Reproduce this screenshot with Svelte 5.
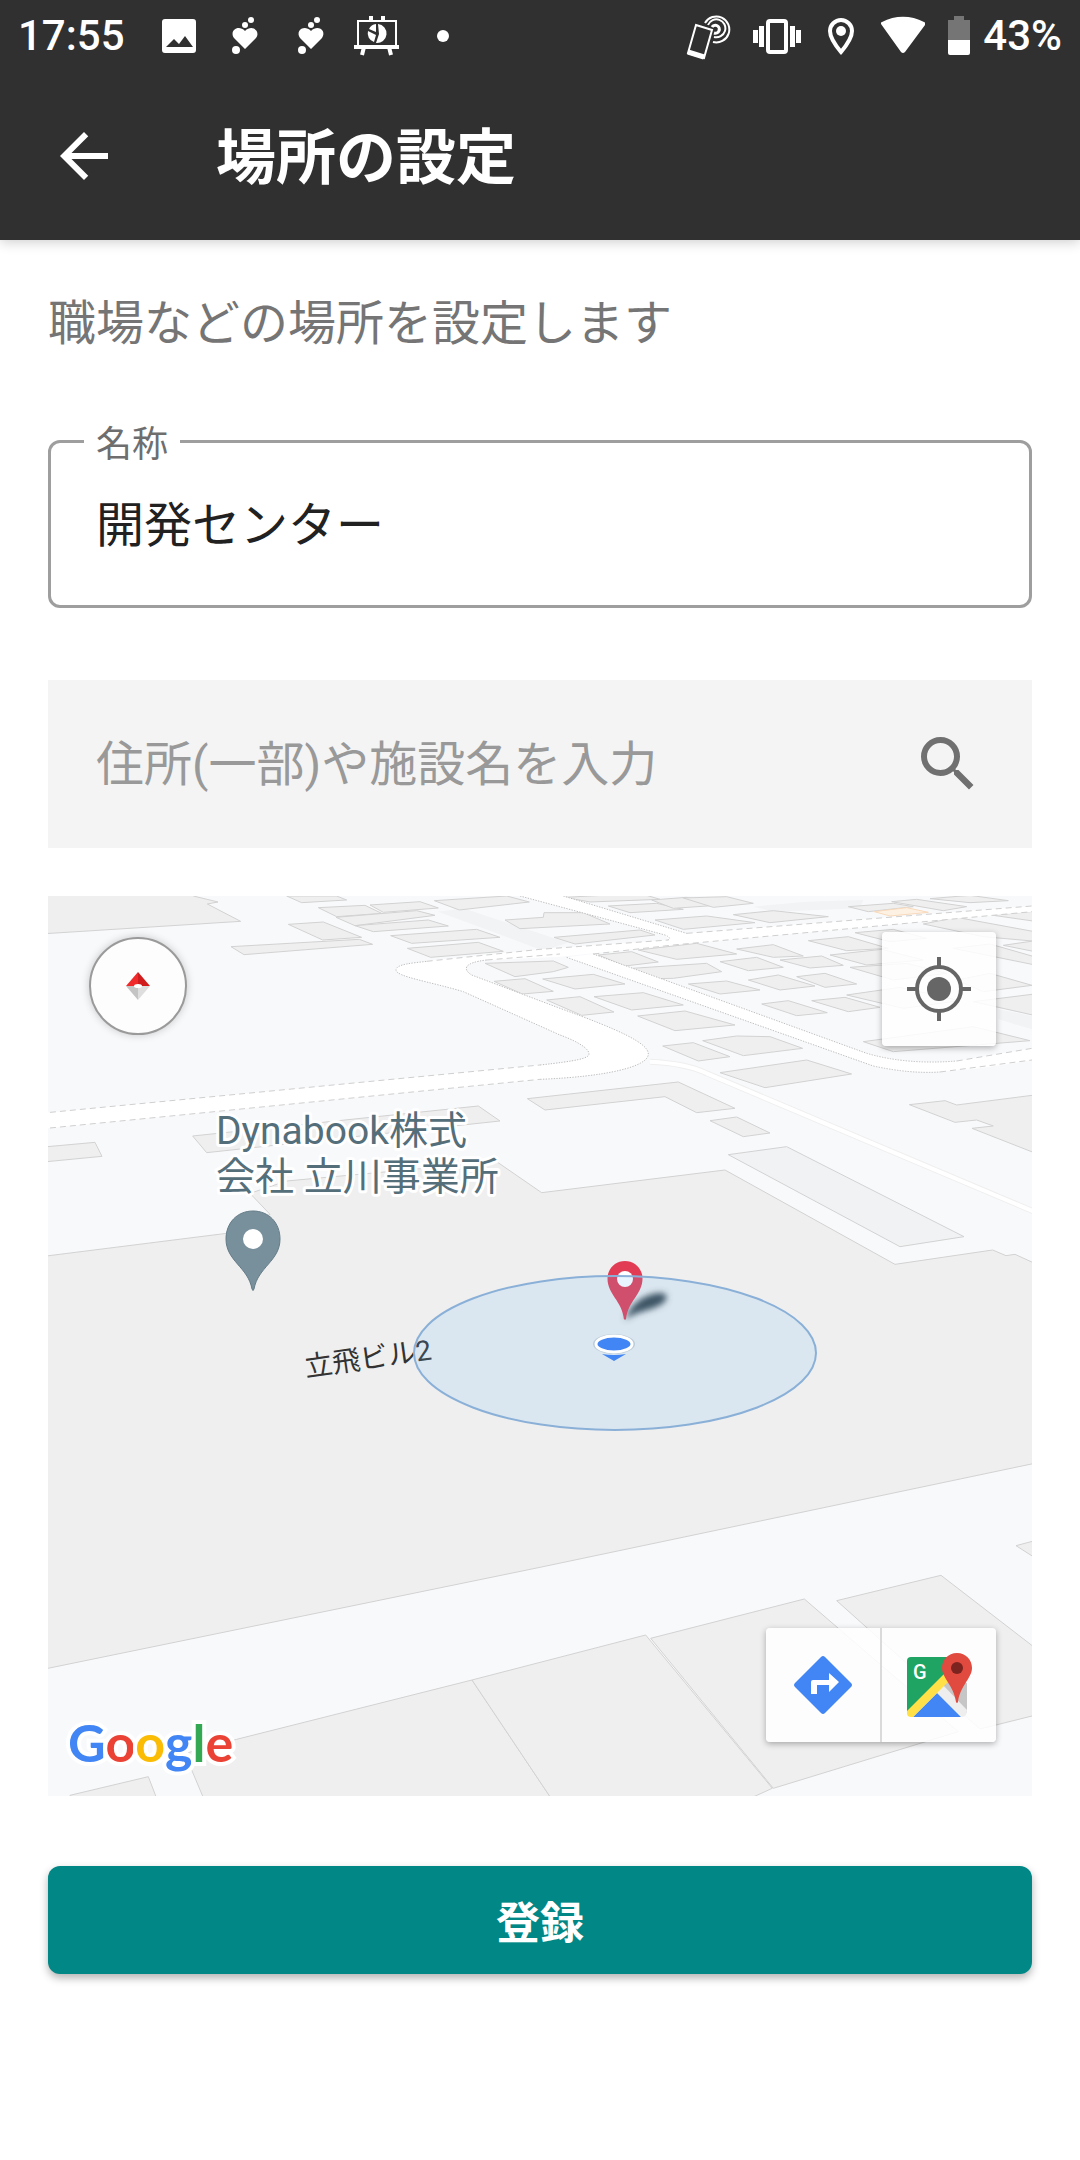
<script>
    let nombre = "開発センター";
    let busqueda = "";

    // Edificios del mapa, agrupados por cuadrante (3 unidades = 1px)
    const cuadrantes = [
        {
            x: -24,
            y: -48,
            edificios: [
                "0,0 440,0 460,48 534,66 502,72 602,124 0,162",
                "745,133 850,126 965,172 848,180",
                "573,200 958,178 998,193 612,224",
                "740,48 785,68 920,60 890,48",
                "835,83 975,76 1025,100 890,110",
                "990,75 1140,65 1195,84 1030,97",
                "888,112 1130,92 1185,106 945,137",
                "945,137 1165,120 1225,138 1000,155",
                "1052,167 1310,148 1380,172 1115,190",
                "1102,205 1315,187 1390,214 1172,232",
                "1183,62 1400,48 1468,66 1258,90",
                "1362,304 1455,296 1540,334 1447,342",
                "0,802 165,787 186,829 0,847",
                "458,768 1315,678 1380,723 500,818",
            ],
        },
        {
            x: 1476,
            y: -48,
            edificios: [
                "75,52 300,40 360,58 150,66",
                "205,78 350,70 430,88 270,98",
                "335,60 440,52 545,75 400,85",
                "430,54 560,50 640,70 520,82",
                "-105,120 10,112 12,98 130,98 210,132 -60,146",
                "345,120 500,108 645,128 430,148",
                "580,104 700,92 865,110 690,128",
                "42,172 300,150 345,165 105,192",
                "295,210 470,190 590,222 410,238",
                "175,225 275,215 355,246 255,258",
                "590,207 700,194 790,228 700,232",
                "720,240 845,228 910,256 810,264",
                "262,266 500,250 545,275 400,295 330,296",
                "540,245 650,232 730,262 625,272",
                "445,312 560,303 660,330 540,342",
                "625,300 715,285 825,318 720,330",
                "770,290 855,280 950,312 855,322",
                "-165,250 40,243 85,262 40,275 -75,290",
                "8,297 160,283 255,312 105,327",
                "20,360 120,350 222,396 125,406",
                "162,350 310,338 430,375 275,390",
                "293,408 435,393 585,435 405,452",
                "665,372 745,362 862,398 770,407",
                "815,362 915,352 1020,382 925,395",
                "368,498 460,488 570,530 475,543",
                "488,482 590,468 690,470 788,505 610,527",
                "540,578 800,540 935,582 675,623",
                "-38,656 415,606 585,685 470,698 375,650 15,690",
                "510,722 590,711 690,759 610,770",
                "1108,674 1215,662 1250,675 1500,643 1500,825 1296,745 1360,738 1310,720 1245,727",
                "945,158 1060,148 1160,175 1050,185",
                "805,182 925,170 1045,205 920,212",
                "870,225 1026,208 1150,240 980,255",
                "930,262 1100,250 1220,280 1060,300",
                "920,345 1080,322 1260,362 1090,385",
                "970,485 1300,440 1470,482 1060,515",
                "925,80 1060,70 1120,80 985,95",
                "1055,65 1130,58 1280,80 1210,92",
                "1170,56 1290,46 1405,62 1290,68",
                "1150,132 1250,112 1500,158 1500,185 1330,170",
                "1360,106 1500,92 1500,126",
                "1240,205 1350,192 1500,235 1500,258",
                "1390,196 1500,180 1500,218",
                "1250,300 1350,280 1476,316 1330,335",
                "1300,365 1500,340 1500,410",
            ],
        },
        {
            x: -24,
            y: 1332,
            edificios: ["90,1366 325,1310 350,1375 90,1375"],
        },
        {
            x: 1476,
            y: 1332,
            edificios: [
                "332,895 793,777 1255,1175 700,1345",
                "890,782 1203,706 1500,935 1500,1122 1320,1167",
                "1428,617 1500,598 1500,663",
            ],
        },
    ];

    // Bordes discontinuos de las calles
    const bordes = [
        "M-1500,700 L0,555",
        "M-1500,747 L0,598",
        "M-340,244 L0,208 L385,180",
        "M-160,240 L60,222",
        "M160,222 L400,195 L1476,95",
        "M440,160 L1476,78",
        "M1250,543 L1476,505",
        "M1200,576 L1476,540",
    ];
    const bordesFinos = [
        "M0,555 C110,543 147,535 147,522 C147,495 60,465 60,465 L-230,335 C-330,305 -432,290 -432,270 C-432,252 -380,249 -340,244",
        "M-160,240 C-230,248 -232,268 -205,285 L60,385 C240,450 325,490 325,522 C325,560 200,590 0,598",
        "M70,48 L440,160",
        "M-60,48 L375,165 Q400,176 380,181",
        "M160,222 L980,520 Q1100,555 1250,543",
        "M80,232 L1000,558 Q1110,582 1200,576",
    ];
</script>

<header>
    <div class="barraEstado">
        <span class="hora">17:55</span>
        <div class="avisos">
            <svg viewBox="0 0 48 48">
                <path
                    fill-rule="evenodd"
                    d="M10 7h28a3 3 0 0 1 3 3v28a3 3 0 0 1-3 3H10a3 3 0 0 1-3-3V10a3 3 0 0 1 3-3zM11 35h27l-8-11-6 8-5-5z"
                />
            </svg>
            {#each [1, 2] as n (n)}
                <svg viewBox="0 0 48 48">
                    <path d="M24 37 13 26c-5-7 4-14 11-7 7-7 16 0 11 7z" />
                    <circle cx="15" cy="38" r="4" />
                    <circle cx="24" cy="13" r="3" />
                    <circle cx="30" cy="8" r="3" />
                </svg>
            {/each}
            <svg viewBox="0 0 48 48">
                <path
                    d="M5 9h38v25H5z"
                    fill="none"
                    stroke="#fff"
                    stroke-width="2"
                />
                <path
                    d="M1 35h45M18 4v5M30 4v5M11 35l-2 8M36 35l2 8"
                    fill="none"
                    stroke="#fff"
                    stroke-width="4"
                />
                <path
                    d="M25 12a9 9 0 0 1-2 19l3-9zM23 12v8l-7-3a9 9 0 0 1 7-5zM15 19l8 4-2 7a9 9 0 0 1-6-11z"
                />
            </svg>
            <svg viewBox="0 0 48 48"><circle cx="24" cy="24" r="6" /></svg>
        </div>

        <div class="sistema">
            <svg width="46" viewBox="0 0 46 48">
                <g fill="none" stroke="#fff">
                    <path
                        d="M20 11a13 13 0 1 1 8 19M23 13a9 9 0 1 1 6 12"
                        stroke-width="2"
                    />
                    <path d="M27 15a4 4 0 1 1 2 6" stroke-width="3" />
                    <path d="m11 13 16 5-8 28-16-5z" stroke-width="2" />
                    <path d="m3 40 16 5" stroke-width="5" />
                </g>
            </svg>
            <svg width="48" viewBox="0 0 48 48">
                <rect
                    x="15"
                    y="9"
                    width="18"
                    height="31"
                    rx="2"
                    fill="none"
                    stroke="#fff"
                    stroke-width="4"
                />
                <path
                    d="M0 18h5v13H0zM6 14h5v21H6zM37 14h5v21h-5zM43 18h5v13h-5z"
                />
            </svg>
            <svg width="36" viewBox="0 0 36 48">
                <path
                    d="M18 8c-6 0-11 5-11 11 0 7 6 15 11 21 5-6 11-14 11-21 0-6-5-11-11-11z"
                    fill="none"
                    stroke="#fff"
                    stroke-width="4"
                />
                <circle cx="18" cy="19" r="5" />
            </svg>
            <svg width="44" viewBox="0 0 44 48">
                <path d="M0 12Q-1 11 1 10C14 3 30 3 43 10q2 1 1 3L24 40q-2 2-4 0z" />
            </svg>
            <svg width="24" viewBox="0 0 24 48">
                <path d="M7 4h10v4h6v20H1V8h6z" fill="#757575" />
                <path d="M1 28h22v13q0 2-2 2H3q-2 0-2-2z" />
            </svg>
            <span class="bateria">43%</span>
        </div>
    </div>

    <div class="barraTitulo">
        <button class="volver" aria-label="戻る">
            <svg viewBox="0 0 24 24">
                <path d="M20 11H7.830l5.590-5.590L12 4l-8 8 8 8 1.410-1.410L7.830 13H20v-2z" />
            </svg>
        </button>
        <h1>場所の設定</h1>
    </div>
</header>

<main>
    <p class="descripcion">職場などの場所を設定します</p>

    <div class="campo">
        <label for="nombre">名称</label>
        <input id="nombre" type="text" bind:value={nombre} />
    </div>

    <div class="buscador">
        <input
            type="text"
            aria-label="住所(一部)や施設名を入力"
            placeholder="住所(一部)や施設名を入力"
            bind:value={busqueda}
        />
        <button aria-label="検索">
            <svg viewBox="0 0 24 24">
                <path
                    d="M15.500 14h-.79l-.28-.27A6.471 6.471 0 0 0 16 9.500 6.500 6.500 0 1 0 9.500 16c1.610 0 3.090-.59 4.230-1.570l.27.28v.79l5 4.990L20.490 19l-4.990-5zm-6 0C7.010 14 5 11.990 5 9.500S7.010 5 9.500 5 14 7.010 14 9.500 11.990 14 9.500 14z"
                />
            </svg>
        </button>
    </div>

    <div class="mapa">
        <svg
            class="plano"
            viewBox="0 0 984 900"
            preserveAspectRatio="xMidYMid slice"
        >
            <defs>
                <filter id="sombra" x="-50%" y="-80%" width="200%" height="260%">
                    <feGaussianBlur stdDeviation="3" />
                </filter>
            </defs>

            <g transform="scale(0.33333)">
                <!-- zonas claras -->
                <g class="zona">
                    <path d="M1171 47 1246 37 1560 140 1486 164z" />
                    <path d="M2116 32 2276 17 2446 12 2436 37 2176 47z" />
                    <path d="M2852 340 2952 360V400L2852 370z" />
                </g>

                {#each cuadrantes as c}
                    <g class="edificio" transform="translate({c.x} {c.y})">
                        {#each c.edificios as puntos}
                            <polygon points={puntos} />
                        {/each}
                    </g>
                {/each}

                <g class="edificio">
                    <polygon
                        points="-5,1080 536,1012 666,955 606,892 716,855 1346,797 1481,890 2031,822 2541,1105 2834,1062 2874,1079 2901,1075 2960,1102 2960,1702 1476,2014 -5,2318"
                    />
                    <polygon
                        points="466,2705 431,2622 420,2570 566,2530 1272,2352 1508,2705"
                    />
                    <polygon
                        points="1508,2705 1272,2352 1793,2217 2173,2677 2111,2705"
                    />
                    <polygon
                        class="claro"
                        points="2041,776 2216,752 2748,1022 2556,1052"
                    />
                </g>

                <!-- calles -->
                <g transform="translate(1476 -48)">
                    <polygon class="tienda" points="1003,95 1100,83 1165,97 1050,108" />
                    <g fill="#fff">
                        <path
                            d="M-1500 700 0 555C110 543 147 535 147 522 147 495 60 465 60 465L-230 335C-330 305-432 290-432 270-432 252-380 249-340 244L0 208 100 222-160 240C-230 248-232 268-205 285L60 385C240 450 325 490 325 522 325 560 200 590 0 598L-1500 747z"
                        />
                        <path d="M-340 244 0 208 385 180 440 160 1476 78V95L400 195 60 230-160 240z" />
                        <path d="M-60 48H70L440 160 400 195 375 165z" />
                        <path
                            d="M80 232 160 222 980 520Q1100 555 1250 543L1476 505V540Q1150 600 1000 558z"
                        />
                    </g>
                    <g class="borde">
                        {#each bordes as d}
                            <path {d} />
                        {/each}
                    </g>
                    <g class="borde fino">
                        {#each bordesFinos as d}
                            <path {d} />
                        {/each}
                    </g>
                    <g fill="none">
                        <path
                            d="M330 545Q440 550 500 580L1480 994"
                            stroke="#efefef"
                            stroke-width="18"
                        />
                        <path
                            d="M330 545Q440 550 500 580L1480 994"
                            stroke="#fff"
                            stroke-width="12"
                        />
                    </g>
                </g>
            </g>

            <text class="edificioNombre" transform="translate(258 481) rotate(-8)">立飛ビル2</text>

            <!-- marcador rojo con el radio encima -->
            <path
                d="M577 424C582 408 596 398 612 397 622 397 620 406 610 410 600 415 586 416 577 424z"
                fill="#34424c"
                filter="url(#sombra)"
            />
            <path
                fill="#e23c55"
                d="M577 365c-10 0-17.500 8-17.500 17.500 0 16 14.500 22 16.500 41h2c2-19 16.500-25 16.500-41C594.500 373 587 365 577 365z"
            />
            <circle cx="577" cy="383" r="8" fill="#fff" />
            <ellipse class="radio" cx="567" cy="457" rx="201" ry="77" />

            <!-- posición actual -->
            <ellipse cx="566" cy="448" rx="21" ry="10" fill="#8aa0b4" opacity="0.4" />
            <ellipse
                cx="566"
                cy="448"
                rx="18"
                ry="8"
                fill="#4285f4"
                stroke="#fff"
                stroke-width="3"
            />
            <path d="M554 458q12 2 24 0l-12 7z" fill="#4285f4" />

            <path
                d="M205 315c-16 0-27 12-27 28 0 22 22 28 26 50q1 3 2 0c4-22 26-28 26-50 0-16-11-28-27-28z"
                fill="#78909c"
                stroke="#647c88"
                stroke-width="1"
            />
            <circle cx="205" cy="343" r="10" fill="#fff" />
            <text class="lugar" x="168" y="248">Dynabook株式</text>
            <text class="lugar" x="168" y="294">会社 立川事業所</text>
        </svg>

        <button class="brujula" aria-label="コンパス">
            <svg viewBox="0 0 28 28">
                <path d="M14 0 2 14h12z" fill="#f02a2a" />
                <path d="M14 0 26 14H14z" fill="#d01c1c" />
                <path d="M2 14h12v14z" fill="#c4c4c4" />
                <path d="M26 14H14v14z" fill="#dedede" />
                <ellipse cx="14" cy="14" rx="4" ry="2" fill="#fff" />
            </svg>
        </button>

        <button class="control ubicar" aria-label="現在地">
            <svg viewBox="0 0 64 64">
                <circle cx="32" cy="32" r="12" fill="#666" />
                <circle
                    cx="32"
                    cy="32"
                    r="22"
                    fill="none"
                    stroke="#666"
                    stroke-width="4"
                />
                <path
                    d="M32 0v9M32 55v9M0 32h9M55 32h9"
                    stroke="#666"
                    stroke-width="4"
                />
            </svg>
        </button>

        <div class="control enlaces">
            <button aria-label="経路">
                <svg viewBox="0 0 64 64">
                    <path
                        d="M30 4q2-2 4 0l26 26q2 2 0 4L34 60q-2 2-4 0L4 34q-2-2 0-4z"
                        fill="#4285f4"
                    />
                    <path d="M20 41V29q0-2 2-2h16v-7l10 9-10 10v-7H26v9z" fill="#fff" />
                </svg>
            </button>
            <button aria-label="マップ">
                <svg viewBox="0 0 64 64">
                    <path d="M4 4h36v22L0 60V8q0-4 4-4z" fill="#1fa463" />
                    <path d="M38 22 60 30V60L30 37z" fill="#c6c6c6" />
                    <path d="M35 31 60 57q0 7-5 7L29 39z" fill="#eee" />
                    <path d="M30 40 54 64H6z" fill="#4285f4" />
                    <path d="M0 58 37 21l4 8L6 64H4q-4 0-4-4z" fill="#ffe047" />
                    <path
                        d="M50 0C41 0 35 7 35 15c0 10 12 18 14 34q1 2 2 0c2-16 14-24 14-34C65 7 59 0 50 0z"
                        fill="#e04a3f"
                    />
                    <circle cx="50" cy="15" r="6" fill="#7b231e" />
                    <text class="letraG" x="6" y="26">G</text>
                </svg>
            </button>
        </div>

        <div class="google">
            <span class="azul">G</span><span class="rojo">o</span><span
                class="amarillo">o</span
            ><span class="azul">g</span><span class="verde">l</span><span
                class="rojo">e</span
            >
        </div>
    </div>

    <button class="registrar">登録</button>
</main>

<style>
    :global(body) {
        background-color: #fff;
        font-family: Roboto, "Noto Sans CJK JP", sans-serif;
    }
    button,
    input {
        font-family: inherit;
        border: none;
        padding: 0;
        margin: 0;
        background: none;
        border-radius: 0;
    }
    svg {
        display: block;
    }

    header {
        background-color: #303030;
        color: #fff;
        box-shadow: 0 2px 12px rgba(0, 0, 0, 0.2);
    }
    .barraEstado {
        display: flex;
        align-items: center;
        height: 72px;
        padding: 0 18px;
        font-size: 42px;
        line-height: 48px;
        font-weight: 500;
    }
    .barraEstado svg {
        height: 48px;
        fill: #fff;
    }
    .avisos {
        display: flex;
        gap: 18px;
        margin-left: 30px;
    }
    .avisos svg {
        width: 48px;
    }
    .sistema {
        display: flex;
        align-items: center;
        gap: 22px;
        margin-left: auto;
    }
    .bateria {
        margin-left: -10px;
    }
    .barraTitulo {
        display: flex;
        align-items: center;
        gap: 96px;
        height: 168px;
        padding: 0 48px;
    }
    .volver svg {
        width: 72px;
        height: 72px;
        fill: #fff;
    }
    h1 {
        margin: 0;
        padding-top: 6px;
        font-size: 60px;
        line-height: 72px;
        font-weight: 700;
    }

    main {
        display: flex;
        flex-direction: column;
        padding: 48px;
    }
    .descripcion {
        margin: 0;
        font-size: 48px;
        line-height: 72px;
        color: #757575;
    }
    .campo {
        position: relative;
        display: flex;
        box-sizing: border-box;
        height: 168px;
        margin-top: 80px;
        border: 3px solid #9e9e9e;
        border-radius: 12px;
    }
    .campo label {
        position: absolute;
        top: -22px;
        left: 33px;
        padding: 0 12px;
        background-color: #fff;
        font-size: 36px;
        line-height: 48px;
        color: #6e6e6e;
    }
    .campo input {
        flex: 1;
        min-width: 0;
        padding: 0 45px 6px;
        font-size: 48px;
        color: #212121;
        border-radius: 12px;
    }
    .buscador {
        display: flex;
        align-items: center;
        height: 168px;
        margin-top: 72px;
        padding: 0 48px;
        background-color: #f4f4f4;
    }
    .buscador input {
        flex: 1;
        min-width: 0;
        height: 100%;
        font-size: 48px;
        color: #212121;
    }
    .buscador input::placeholder {
        color: #999;
    }
    .buscador svg {
        width: 72px;
        height: 72px;
        fill: #707070;
    }

    .mapa {
        position: relative;
        height: 900px;
        margin-top: 48px;
        overflow: hidden;
        background-color: #f8f9fb;
    }
    .plano {
        width: 100%;
        height: 100%;
    }
    .zona {
        fill: #f1f3f5;
    }
    .edificio {
        fill: #efefef;
        stroke: #d2d2d2;
        stroke-width: 3;
    }
    .claro {
        fill: #f1f2f4;
    }
    .tienda {
        fill: #fdf1e4;
        stroke: #f8d9ba;
        stroke-width: 3;
    }
    .borde {
        fill: none;
        stroke: #cfcfcf;
        stroke-width: 3;
        stroke-dasharray: 18 12;
    }
    .fino {
        stroke: #bdbdbd;
        stroke-dasharray: 4 4;
    }
    .edificioNombre {
        font-size: 28px;
        fill: #333;
    }
    .radio {
        fill: rgba(106, 186, 246, 0.15);
        stroke: #8ab0d8;
        stroke-width: 2;
    }
    .lugar {
        font-size: 39px;
        fill: #546e7a;
        stroke: #fff;
        stroke-width: 6;
        stroke-linejoin: round;
        paint-order: stroke;
    }

    .brujula {
        position: absolute;
        top: 41px;
        left: 41px;
        display: flex;
        align-items: center;
        justify-content: center;
        width: 98px;
        height: 98px;
        border: 2px solid #9a9a9a;
        border-radius: 50%;
        background-color: #fdfdfd;
        box-shadow: 0 0 8px rgba(0, 0, 0, 0.2);
    }
    .brujula svg {
        width: 28px;
        height: 28px;
    }
    .control {
        position: absolute;
        right: 36px;
        height: 114px;
        border-radius: 4px;
        background-color: rgba(255, 255, 255, 0.85);
        box-shadow: 0 2px 6px rgba(0, 0, 0, 0.3);
    }
    .control svg {
        width: 64px;
        height: 64px;
        margin: auto;
        overflow: visible;
    }
    .ubicar {
        top: 36px;
        width: 114px;
    }
    .enlaces {
        bottom: 54px;
        display: flex;
        width: 230px;
    }
    .enlaces button {
        flex: 1;
    }
    .enlaces button + button {
        border-left: 2px solid #dadada;
    }
    .letraG {
        font-size: 20px;
        font-weight: 500;
        fill: #fff;
    }
    .google {
        position: absolute;
        left: 20px;
        bottom: 24px;
        font-family: Lato, sans-serif;
        font-size: 52px;
        line-height: 60px;
        font-weight: 700;
        -webkit-text-stroke: 8px #fff;
        paint-order: stroke fill;
    }
    .azul {
        color: #4285f4;
    }
    .rojo {
        color: #ea4335;
    }
    .amarillo {
        color: #fbbc05;
    }
    .verde {
        color: #34a853;
    }

    .registrar {
        height: 108px;
        margin-top: 70px;
        border-radius: 12px;
        background-color: #018786;
        color: #fff;
        font-size: 44px;
        font-weight: 700;
        box-shadow: 0 4px 8px rgba(0, 0, 0, 0.3);
    }
</style>
